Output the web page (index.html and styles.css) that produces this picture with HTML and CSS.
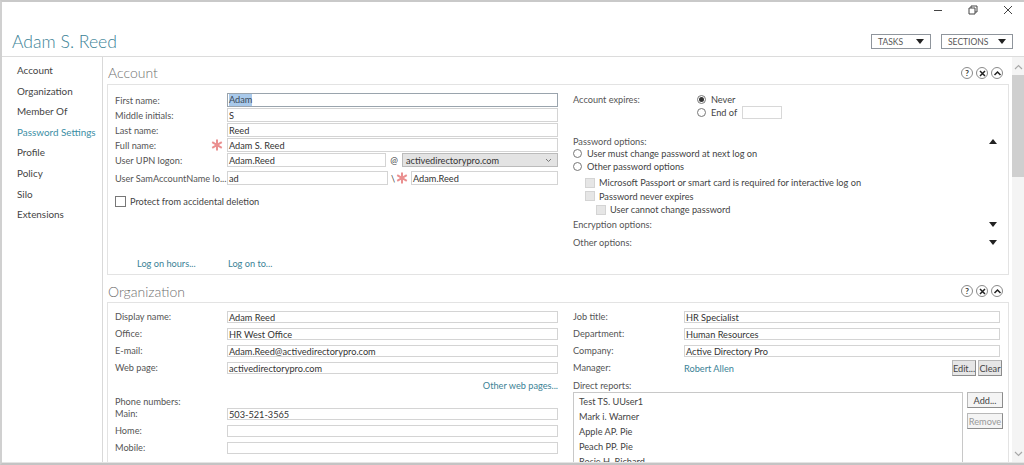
FILE: index.html
```html
<!DOCTYPE html>
<html lang="en">
<head>
    <meta charset="UTF-8">
    <title>Adam S. Reed</title>
    <link rel="stylesheet" href="styles.css">
</head>
<body>
    <div class="window">
        <div class="caption">
            <svg class="caption-icon" width="10" height="10" viewBox="0 0 10 10"><path d="M1 5.5h8"/></svg>
            <svg class="caption-icon" width="10" height="10" viewBox="0 0 10 10"><path d="M1 3h6v6H1zM3 3V1h6v6H7"/></svg>
            <svg class="caption-icon" width="10" height="10" viewBox="0 0 10 10"><path d="M1 1l8 8M9 1l-8 8"/></svg>
        </div>
        <header class="titlebar">
            <h1>Adam S. Reed</h1>
            <div class="tool-btn tasks">TASKS<span class="tri-down"></span></div>
            <div class="tool-btn sections">SECTIONS<span class="tri-down"></span></div>
        </header>
        <div class="body">
            <nav class="nav">
                <a>Account</a>
                <a>Organization</a>
                <a>Member Of</a>
                <a class="current">Password Settings</a>
                <a>Profile</a>
                <a>Policy</a>
                <a>Silo</a>
                <a>Extensions</a>
            </nav>
            <main class="content">
                <section class="section">
                    <div class="section-head first-head">
                        <h2>Account</h2>
                        <div class="section-tools">
                            <span class="round">?</span>
                            <span class="round"><svg width="9" height="9" viewBox="0 0 9 9"><path class="heavy" d="M2 2l5 5M7 2l-5 5"/></svg></span>
                            <span class="round"><svg width="9" height="9" viewBox="0 0 9 9"><path class="heavy" d="M1.500 6l3-3 3 3"/></svg></span>
                        </div>
                    </div>
                    <div class="panel account-panel">
                        <div class="col-left">
                            <div class="rows">
                                <div class="row"><label>First name:</label><div class="field focused"><span class="selected">Adam</span></div></div>
                                <div class="row"><label>Middle initials:</label><div class="field">S</div></div>
                                <div class="row"><label>Last name:</label><div class="field">Reed</div></div>
                                <div class="row"><label>Full name:</label><div class="field">Adam S. Reed</div>
                                    <svg class="star star-full" width="12" height="12" viewBox="0 0 12 12"><path d="M6 .5v11M1.200 3.200l9.600 5.600M10.800 3.200L1.200 8.800"/></svg></div>
                                <div class="row"><label>User UPN logon:</label>
                                    <div class="upn">
                                        <div class="field">Adam.Reed</div>
                                        <span class="at">@</span>
                                        <div class="field select">activedirectorypro.com<svg width="7" height="5" viewBox="0 0 7 5"><path d="M1 1l2.500 2.500L6 1"/></svg></div>
                                    </div>
                                </div>
                                <div class="row sam"><label>User SamAccountName lo...</label>
                                    <div class="samname">
                                        <div class="field">ad</div>
                                        <span class="slash">\</span>
                                        <svg class="star" width="12" height="12" viewBox="0 0 12 12"><path d="M6 .5v11M1.200 3.200l9.600 5.600M10.800 3.200L1.200 8.800"/></svg>
                                        <div class="field">Adam.Reed</div>
                                    </div>
                                </div>
                            </div>
                            <div class="protect"><span class="check"></span>Protect from accidental deletion</div>
                            <div class="logon-links"><a class="link">Log on hours...</a><a class="link">Log on to...</a></div>
                        </div>
                        <div class="col-right">
                            <div class="expires">
                                <label>Account expires:</label>
                                <div class="expires-opts">
                                    <div class="opt"><span class="radio on"></span>Never</div>
                                    <div class="opt"><span class="radio"></span>End of<span class="date"></span></div>
                                </div>
                            </div>
                            <div class="group-head pw-head">Password options:<span class="tri-up"></span></div>
                            <div class="opt pw-opt"><span class="radio"></span>User must change password at next log on</div>
                            <div class="opt pw-opt"><span class="radio"></span>Other password options</div>
                            <div class="opt sub first"><span class="check off"></span>Microsoft Passport or smart card is required for interactive log on</div>
                            <div class="opt sub"><span class="check off"></span>Password never expires</div>
                            <div class="opt sub deep"><span class="check off"></span>User cannot change password</div>
                            <div class="group-head enc-head">Encryption options:<span class="tri-down"></span></div>
                            <div class="group-head other-head">Other options:<span class="tri-down"></span></div>
                        </div>
                    </div>
                </section>
                <section class="section">
                    <div class="section-head">
                        <h2>Organization</h2>
                        <div class="section-tools">
                            <span class="round">?</span>
                            <span class="round"><svg width="9" height="9" viewBox="0 0 9 9"><path class="heavy" d="M2 2l5 5M7 2l-5 5"/></svg></span>
                            <span class="round"><svg width="9" height="9" viewBox="0 0 9 9"><path class="heavy" d="M1.500 6l3-3 3 3"/></svg></span>
                        </div>
                    </div>
                    <div class="panel org-panel">
                        <div class="col-left">
                            <div class="rows wide">
                                <div class="row"><label>Display name:</label><div class="field">Adam Reed</div></div>
                                <div class="row"><label>Office:</label><div class="field">HR West Office</div></div>
                                <div class="row"><label>E-mail:</label><div class="field">Adam.Reed@activedirectorypro.com</div></div>
                                <div class="row"><label>Web page:</label><div class="field">activedirectorypro.com</div></div>
                            </div>
                            <div class="other-web"><a class="link">Other web pages...</a></div>
                            <div class="phone-head">Phone numbers:</div>
                            <div class="rows wide">
                                <div class="row"><label>Main:</label><div class="field">503-521-3565</div></div>
                                <div class="row"><label>Home:</label><div class="field"></div></div>
                                <div class="row"><label>Mobile:</label><div class="field"></div></div>
                            </div>
                        </div>
                        <div class="col-right">
                            <div class="rows wide right-rows">
                                <div class="row"><label>Job title:</label><div class="field">HR Specialist</div></div>
                                <div class="row"><label>Department:</label><div class="field">Human Resources</div></div>
                                <div class="row"><label>Company:</label><div class="field">Active Directory Pro</div></div>
                                <div class="row manager"><label>Manager:</label><a class="link">Robert Allen</a>
                                    <div class="manager-btns"><span class="btn">Edit...</span><span class="btn">Clear</span></div>
                                </div>
                            </div>
                            <div class="reports-head">Direct reports:</div>
                            <div class="reports">
                                <div class="report-list">
                                    <div>Test TS. UUser1</div>
                                    <div>Mark i. Warner</div>
                                    <div>Apple AP. Pie</div>
                                    <div>Peach PP. Pie</div>
                                    <div>Rosie H. Richard</div>
                                </div>
                                <div class="report-btns">
                                    <span class="btn">Add...</span>
                                    <span class="btn disabled">Remove</span>
                                </div>
                            </div>
                        </div>
                    </div>
                </section>
            </main>
            <div class="scrollbar">
                <svg class="arrow" width="9" height="6" viewBox="0 0 9 6"><path d="M1 5l3.500-3.500L8 5"/></svg>
                <div class="thumb"></div>
                <svg class="arrow bottom" width="9" height="6" viewBox="0 0 9 6"><path d="M1 1l3.500 3.500L8 1"/></svg>
            </div>
        </div>
    </div>
</body>
</html>
```

FILE: styles.css
```css
html, body {
    margin: 0;
    height: 100%;
    overflow: hidden;
}
body {
    font-family: "Lato", "Open Sans", sans-serif;
    font-size: 9.200px;
    color: #444;
    background: #fff;
}
a { text-decoration: none; }
.window {
    box-sizing: border-box;
    width: 1024px;
    height: 465px;
    border-top: 2px solid #c9c9c9;
    border-left: 2px solid #d0d0d0;
    border-bottom: 2px solid #c4c4c4;
    display: flex;
    flex-direction: column;
    overflow: hidden;
}
.caption {
    height: 14px;
    padding-top: 1px;
    display: flex;
    justify-content: flex-end;
    align-items: center;
    gap: 25px;
    padding-right: 11px;
}
.caption-icon path {
    fill: none;
    stroke: #444;
    stroke-width: 1;
}
.titlebar {
    height: 39px;
    display: flex;
    align-items: flex-start;
    border-bottom: 1px solid #dcdcdc;
}
.titlebar h1 {
    margin: 12px auto 0 10px;
    font-size: 17.600px;
    line-height: 26px;
    font-weight: 300;
    color: #3b8296;
}
.tool-btn {
    box-sizing: border-box;
    height: 15px;
    margin-top: 17px;
    border: 1px solid #8f959c;
    padding: 0 6px;
    display: flex;
    align-items: center;
    justify-content: space-between;
    font-size: 8.500px;
    color: #555;
}
.tasks { width: 60px; margin-right: 10px; }
.sections { width: 72px; margin-right: 11px; }
.tri-down, .tri-up {
    width: 0;
    height: 0;
    border-left: 4px solid transparent;
    border-right: 4px solid transparent;
}
.tri-down { border-top: 5px solid #222; }
.tri-up { border-bottom: 5px solid #222; }

.body {
    flex: 1;
    display: flex;
    min-height: 0;
    border-bottom: 1px solid #e4e4e4;
}
.nav {
    width: 101px;
    flex: none;
    box-sizing: border-box;
    border-right: 1px solid #d9d9d9;
    padding: 3px 0 0 15px;
    display: flex;
    flex-direction: column;
    font-size: 9.900px;
}
.nav a {
    height: 20.600px;
    line-height: 20.600px;
    color: #444;
    white-space: nowrap;
}
.nav a.current { color: #3b8ea5; }
.content {
    flex: 1;
    min-width: 0;
    overflow: hidden;
    padding: 0 3px 0 4px;
}
.section-head {
    display: flex;
    justify-content: space-between;
    height: 27px;
}
.section-head h2 {
    margin: 6px 0 0 1px;
    font-size: 14px;
    line-height: 22px;
    font-weight: 300;
    color: #707070;
}
.first-head h2 { margin-top: 5px; }
.section-tools {
    display: flex;
    gap: 3px;
    margin: 10px 6px 0 0;
}
.round {
    box-sizing: border-box;
    width: 12px;
    height: 12px;
    border: 1px solid #8a8a8a;
    border-radius: 50%;
    display: flex;
    align-items: center;
    justify-content: center;
    font-size: 8px;
    font-weight: 700;
    color: #333;
}
.round svg { display: block; }
.heavy {
    fill: none;
    stroke: #222;
    stroke-width: 1.500;
}
.panel {
    box-sizing: border-box;
    border: 1px solid #e3e3e3;
    display: flex;
    padding: 8px 0 0 7px;
}
.account-panel { height: 191px; }
.col-left { width: 443px; flex: none; }
.col-right { margin-left: 15px; flex: 1; min-width: 0; }
.rows {
    display: flex;
    flex-direction: column;
    gap: 1px;
}
.row {
    display: flex;
    align-items: center;
    height: 14px;
    position: relative;
}
.row label {
    width: 112px;
    flex: none;
    white-space: nowrap;
    color: #555;
}
.right-rows .row label { width: 111px; }
.field {
    box-sizing: border-box;
    flex: 1;
    min-width: 0;
    height: 100%;
    border: 1px solid #d4d4d4;
    padding-left: 1px;
    display: flex;
    align-items: center;
    color: #333;
    white-space: nowrap;
}
.focused { border-color: #9aa4ad; }
.selected {
    background: #a9c9ea;
    color: #3a4a5a;
    line-height: 12px;
}
.star path {
    fill: none;
    stroke: #ea9090;
    stroke-width: 2;
}
.star-full {
    position: absolute;
    left: 96px;
    top: 1px;
}
.upn, .samname {
    flex: 1;
    height: 100%;
    display: flex;
    align-items: center;
}
.upn > .field:first-child { flex: none; width: 159px; }
.at { width: 16px; text-align: center; }
.select {
    background: #e3e3e3;
    border-color: #bbb;
    justify-content: space-between;
    padding: 0 5px 0 3px;
}
.select svg path {
    fill: none;
    stroke: #777;
}
.sam { margin-top: 3px; }
.samname > .field:first-child { flex: none; width: 161px; }
.samname > .field:last-child { flex: none; width: 147px; }
.slash { width: 5px; margin-left: 3px; }
.samname .star { margin: 0 3px 0 0; flex: none; }
.check {
    box-sizing: border-box;
    display: inline-block;
    width: 11px;
    height: 11px;
    border: 1px solid #777;
    flex: none;
}
.check.off {
    width: 10px;
    height: 10px;
    background: #e6e6e6;
    border-color: #d4d4d4;
    margin-right: 4px;
}
.protect {
    display: flex;
    align-items: center;
    gap: 4px;
    margin-top: 11px;
    color: #444;
}
.logon-links {
    display: flex;
    margin: 51px 0 0 22px;
}
.logon-links a:first-child { width: 91px; }
.link { color: #3b8296; }

.expires {
    display: flex;
    align-items: flex-start;
    height: 36px;
}
.expires label { width: 124px; padding-top: 1px; color: #555; }
.opt {
    display: flex;
    align-items: center;
    height: 13px;
    color: #444;
}
.radio {
    box-sizing: border-box;
    width: 9px;
    height: 9px;
    border: 1px solid #777;
    border-radius: 50%;
    margin-right: 5px;
    flex: none;
    position: relative;
}
.radio.on::after {
    content: "";
    position: absolute;
    left: 1px;
    top: 1px;
    width: 5px;
    height: 5px;
    border-radius: 50%;
    background: #333;
}
.date {
    box-sizing: border-box;
    width: 40px;
    height: 13px;
    margin-left: 5px;
    border: 1px solid #d8d8d8;
}
.group-head {
    display: flex;
    justify-content: space-between;
    align-items: center;
    height: 13px;
    padding-right: 11px;
    color: #555;
}
.pw-head { margin-top: 6px; height: 12px; }
.sub { margin-left: 12px; height: 13.500px; }
.sub.first { margin-top: 3px; }
.deep { margin-left: 23px; }
.enc-head { margin-top: 1px; }
.other-head { margin-top: 5px; }

.org-panel { height: 200px; margin-top: 0; }
.wide { gap: 5px; }
.wide .row { height: 12px; }
.wide .row label { padding-bottom: 2px; }
.other-web {
    text-align: right;
    margin-top: 5px;
    line-height: 13px;
}
.phone-head { margin-top: 3px; line-height: 13px; color: #555; }
.manager .link { flex: 1; }
.manager-btns {
    display: flex;
    gap: 2px;
    margin-right: 6px;
}
.btn {
    box-sizing: border-box;
    display: flex;
    align-items: center;
    justify-content: center;
    height: 16px;
    background: #e6e6e6;
    border: 1px solid #b8b8b8;
    border-right-color: #8c8c8c;
    border-bottom-color: #8c8c8c;
    color: #444;
}
.manager-btns .btn { width: 24px; }
.right-rows .row .field { margin-right: 8px; }
.reports-head { margin-top: 6px; line-height: 12px; color: #555; }
.reports {
    display: flex;
    gap: 4px;
}
.report-list {
    box-sizing: border-box;
    width: 390px;
    height: 90px;
    border: 1px solid #c8c8c8;
    padding: 1px 5px;
    line-height: 15px;
    color: #444;
    flex: none;
}
.report-btns {
    display: flex;
    flex-direction: column;
    gap: 5px;
    width: 36px;
}
.report-btns .btn { background: #f4f4f4; }
.report-btns .disabled { color: #999; }
.scrollbar {
    width: 12px;
    flex: none;
    display: flex;
    flex-direction: column;
    align-items: center;
    background: #f4f4f4;
    position: relative;
}
.arrow {
    margin: 7px 0 5px;
    flex: none;
}
.arrow path {
    fill: none;
    stroke: #a8a8a8;
    stroke-width: 1.200;
}
.thumb {
    width: 12px;
    height: 102px;
    background: #cfcfcf;
}
.arrow.bottom { margin: auto 0 5px; }
```
